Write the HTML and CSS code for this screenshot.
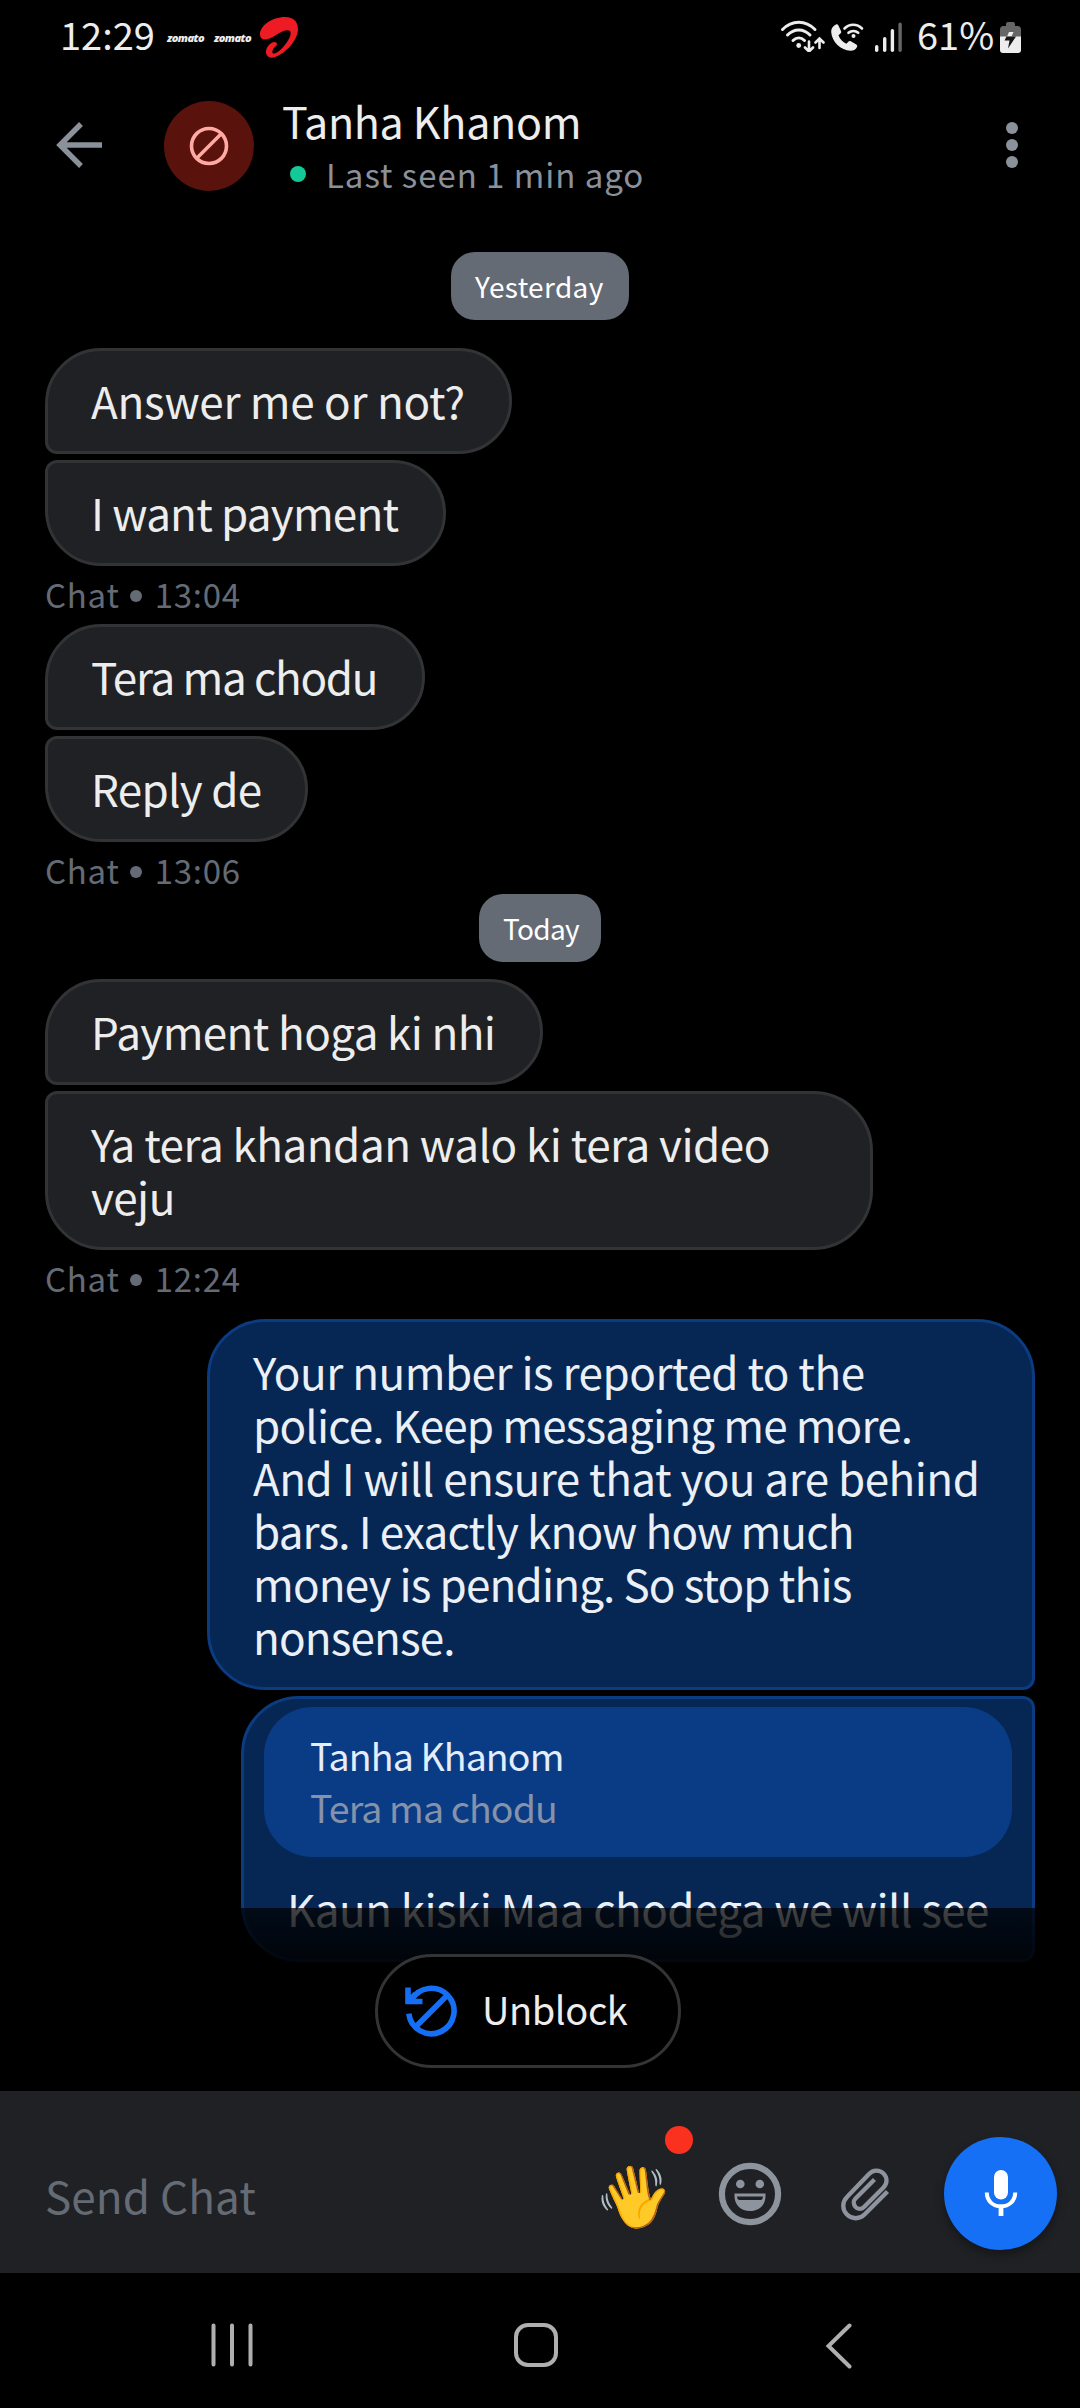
FILE: index.html
```html
<!DOCTYPE html>
<html lang="en">
<head>
<meta charset="utf-8">
<title>Chat – Tanha Khanom</title>
<link rel="stylesheet" href="styles.css">
</head>
<body>
<div class="status">
  <span class="clock">12:29</span>
  <span class="zomato">zomato</span>
  <span class="zomato">zomato</span>
  <svg class="airtel" width="40" height="42" viewBox="0 0 40 42">
    <path fill="#ed1c24" d="M1 18C1 10 13 1 26 1C35 1 39 6 39 14C38 25 27 37 16 41C11 43 7 40 7 36C7 31 11 27 15 26C18 26 19 28 17 30C14 32 13 35 13.500 37C15 39 20 36 25 30C30 24 33 18 31 15C29 13 23 15 17 19C10 24 1 26 1 18Z"/>
  </svg>
  <span class="push"></span>
  <svg class="signals" width="126" height="36" viewBox="0 0 126 36">
    <g fill="none" stroke="#ededed" stroke-width="3" stroke-linecap="round">
      <path d="M3.500 13.500C13 3.800 26.500 3.800 36 13.500M8.500 19C15 12.200 24.500 12.200 31 19M14 24.500C17.600 21 22 21 25.500 24.500"/>
      <path stroke-width="2.600" d="M30 25.500V35M26 31.500l4 4l4-4M40.500 32V22.500M36.500 26.500l4-4l4 4"/>
      <path stroke-width="2.600" d="M65.500 12.500C70.500 7.500 78 7.500 83 12.500M69.500 16.800C72.300 14.300 76.500 14.300 79.200 16.800"/>
    </g>
    <circle cx="19.700" cy="29.500" r="2.400" fill="#ededed"/>
    <circle cx="74.500" cy="20" r="2" fill="#ededed"/>
    <path fill="#ededed" d="M57 8.500c-3 1.500-5 4-4.800 7.500c.7 10 9.500 18.500 19.300 18.700c3.500 0 5.500-1.600 6.600-4c.3-.9 0-1.700-.8-2.200l-5.500-3.200c-.9-.5-1.800-.3-2.500.4l-1.900 2c-3.800-1.700-6.500-4.700-7.900-8.400l2-1.800c.6-.6.9-1.400.6-2.300l-2.800-5.900c-.4-.9-1.400-1.200-2.300-.8z"/>
    <g fill="#ededed"><rect x="96" y="29" width="3.400" height="7" rx="1.700"/><rect x="104" y="21" width="3.400" height="15" rx="1.700"/><rect x="111.700" y="13" width="3.400" height="23" rx="1.700"/><rect x="119.400" y="6.500" width="3.400" height="29.500" rx="1.700" fill="#666"/></g>
  </svg>
  <span class="percent">61%</span>
  <svg class="battery" width="21" height="32" viewBox="0 0 21 32">
    <path fill="#666" d="M0 15V7.500Q0 4 3.500 4H6V2Q6 0 8 0h5Q15 0 15 2V4h2.500Q21 4 21 7.500V15Z"/>
    <path fill="#ededed" d="M0 14.500H21V28Q21 31 18 31H3Q0 31 0 28Z"/>
    <path fill="#ededed" d="M9 10h4.500L11.500 14.500H7Z"/>
    <path fill="#161616" d="M6.500 14.500H16L8 26.500L9.500 18.500H4.500Z"/>
  </svg>
</div>

<header class="header">
  <svg class="back" width="48" height="48" viewBox="0 0 48 48" fill="none" stroke="#8b919b" stroke-width="5.400"><path d="M47 24H6M26 3L5 24L26 45"/></svg>
  <div class="avatar">
    <svg width="40" height="40" viewBox="0 0 40 40" fill="none" stroke="#ffaba4" stroke-width="3.600"><circle cx="20" cy="20" r="17.500"/><path d="M32 8L8 32"/></svg>
  </div>
  <div class="who">
    <div class="name">Tanha Khanom</div>
    <div class="seen"><i class="online"></i>Last seen 1 min ago</div>
  </div>
  <div class="more"><i></i><i></i><i></i></div>
</header>

<main class="chat">
  <div class="day yesterday">Yesterday</div>
  <div class="msg first answer">Answer me or not?</div>
  <div class="msg last want">I want payment</div>
  <div class="time">Chat<i></i>13:04</div>
  <div class="msg first tera">Tera ma chodu</div>
  <div class="msg last reply">Reply de</div>
  <div class="time">Chat<i></i>13:06</div>
  <div class="day today">Today</div>
  <div class="msg first payment">Payment hoga ki nhi</div>
  <div class="msg last long">Ya tera khandan walo ki tera video<br>veju</div>
  <div class="time">Chat<i></i>12:24</div>
  <div class="msg mine first long">Your number is reported to the<br><span class="tight">police. Keep messaging me more.</span><br>And I will ensure that you are behind<br><span class="tight">bars. I exactly know how much<br>money is pending. So stop this<br>nonsense.</span></div>
  <div class="msg mine last quoting">
    <div class="quote"><div>Tanha Khanom</div><div class="quoted">Tera ma chodu</div></div>
    Kaun kiski Maa chodega we will see
  </div>
  <div class="fade"></div>
  <button class="unblock">
    <svg width="54" height="54" viewBox="0 0 54 54" fill="none" stroke="#156ff5" stroke-width="5.600"><path d="M4.800 29.700A22.700 22.700 0 1 0 7.500 16M11 43.500L43.500 11"/><path d="M4 3.500V17.500H18.500M4.500 17L11.500 10"/></svg>
    <span>Unblock</span>
  </button>
</main>

<section class="composer">
  <span class="hint">Send Chat</span>
  <div class="wave"><span>👋</span><i></i></div>
  <svg class="smile" width="64" height="64" viewBox="0 0 64 64">
    <circle cx="32" cy="32" r="28.100" fill="none" stroke="#8e949d" stroke-width="6.200"/>
    <g fill="#8e949d"><circle cx="22.300" cy="22" r="4.300"/><circle cx="41.800" cy="22" r="4.300"/><path d="M16.500 31.500H47.500V34C47.500 43 41 49 32 49S16.500 43 16.500 34Z"/></g>
    <path fill="#202124" d="M19 34.500H45Q45 37.500 43 38H21Q19 37.500 19 34.500Z"/>
  </svg>
  <svg class="clip" width="50" height="56" viewBox="0 0 50 56" fill="none" stroke="#8e949d" stroke-width="4.300">
    <path d="M47.500 25.500L24.500 48.500C19.500 53.500 12 53.500 7 48.500S2 36 7 31L29 8C33 3.500 39.500 3.500 43.500 7.500S47.500 17.500 43.500 21.500L24 41C21.500 43.500 17.500 43.500 15.500 41S13 35 15.500 32.500L34.500 13.500"/>
  </svg>
  <div class="mic">
    <svg width="34" height="48" viewBox="0 0 34 48"><rect x="10" y="0" width="14" height="29.500" rx="7" fill="#fff"/><path fill="none" stroke="#fff" stroke-width="4" d="M2.800 22.500C2.800 31 9 36.300 17 36.300S31.200 31 31.200 22.500"/><path stroke="#fff" stroke-width="4.800" d="M17 36V46"/></svg>
  </div>
</section>

<nav class="nav">
  <svg width="42" height="44" viewBox="0 0 42 44" stroke="#afafaf" stroke-width="4" stroke-linecap="round"><path d="M2.500 2.500V41.500M21 2.500V41.500M39.500 2.500V41.500"/></svg>
  <svg class="home" width="44" height="44" viewBox="0 0 44 44" fill="none" stroke="#afafaf" stroke-width="4"><rect x="2" y="2" width="40" height="40" rx="12"/></svg>
  <svg class="prev" width="28" height="46" viewBox="0 0 28 46" fill="none" stroke="#afafaf" stroke-width="4" stroke-linecap="round"><path d="M24.500 2.500L3.500 23L24.500 43.500"/></svg>
</nav>
</body>
</html>
```
FILE: styles.css
```css
* { box-sizing: border-box; }
body {
  margin: 0;
  width: 1080px;
  height: 2408px;
  display: flex;
  flex-direction: column;
  background: #000;
  color: #ededed;
  font-family: "Noto Sans CJK SC", "Noto Sans", sans-serif;
  font-size: 44px;
  white-space: nowrap;
  overflow: hidden;
}
svg { display: block; flex: none; }

.status { height: 72px; display: flex; align-items: flex-start; padding: 0 59px 0 60px; }
.clock, .percent { font-size: 38px; line-height: 67px; }
.clock { width: 107px; }
.zomato { width: 47px; font: italic 800 11px/76px "Open Sans", sans-serif; letter-spacing: -.6px; }
.airtel { margin-top: 16px; margin-left: -2px; }
.push { flex: 1; }
.signals { margin-top: 16px; margin-right: 12px; }
.percent { width: 83px; }
.battery { margin-top: 22px; }

.header { height: 146px; display: flex; align-items: flex-start; padding: 0 62px 0 55px; }
.back { margin-top: 49px; }
.avatar { width: 90px; height: 90px; margin: 29px 0 0 61px; border-radius: 50%; background: #5a120c; display: grid; place-items: center; }
.who { margin-left: 28px; flex: 1; }
.name { font-size: 43px; line-height: 60px; margin-top: 18px; letter-spacing: -.3px; }
.seen { display: flex; align-items: center; font-size: 33px; line-height: 48px; letter-spacing: .95px; color: #8b919b; }
.online { width: 16px; height: 16px; margin: -1px 20px 0 8px; border-radius: 50%; background: #12c997; }
.more { display: flex; flex-direction: column; gap: 5px; margin-top: 50px; }
.more i { width: 12px; height: 12px; border-radius: 50%; background: #8b919b; }

.chat { position: relative; height: 1873px; padding: 34px 45px 0; display: flex; flex-direction: column; align-items: flex-start; overflow: hidden; }
.day { align-self: center; height: 68px; padding: 0 24px; border-radius: 24px; background: #656b75; color: #fff; font-size: 28px; line-height: 68px; letter-spacing: .35px; flex: none; }
.yesterday { width: 178px; margin-bottom: 28px; }
.today { width: 122px; margin-bottom: 17px; margin-top: -6px; letter-spacing: -.7px; }
.msg {
  flex: none;
  padding: 23px 0 24px 43px;
  margin-bottom: 6px;
  border: 3px solid #323335;
  background: #202124;
  line-height: 53px;
  letter-spacing: -.5px;
}
.first { border-radius: 56px 53px 53px 12px; }
.last { border-radius: 12px 53px 53px 56px; }
.last.long { border-radius: 12px 60px 60px 58px; }
.answer { width: 467px; letter-spacing: -.25px; }
.want { width: 401px; letter-spacing: -.8px; }
.tera { width: 380px; letter-spacing: -1.3px; }
.reply { width: 263px; letter-spacing: -.7px; }
.payment { width: 498px; letter-spacing: -.6px; }
.long { width: 828px; }
.tight { letter-spacing: -.85px; }
.time { display: flex; align-items: center; height: 52px; margin: -6px 0 6px; padding-top: 4px; font-size: 33px; letter-spacing: .75px; color: #656b75; }
.time i { width: 12px; height: 12px; margin: 3px 13px 0 10px; border-radius: 50%; background: #656b75; }
.mine { align-self: flex-end; background: #062654; border-color: #0b3b80; color: #ebeff6; }
.mine.first { border-radius: 58px 58px 12px 58px; margin-top: 11px; }
.mine.last { border-radius: 58px 12px 12px 58px; }
.quoting { width: 794px; padding-top: 8px; letter-spacing: -.58px; }
.quote { width: 748px; height: 150px; margin: 0 0 25px -23px; padding: 22px 46px; border-radius: 48px; background: #0a3c85; font-size: 37.500px; line-height: 52px; letter-spacing: -.88px; color: #e4edfb; }
.quoted { color: #8592aa; }
.fade { position: absolute; left: 0; right: 0; top: 1690px; height: 183px; background: linear-gradient(rgba(0,0,0,.72), #000 50%); }
.unblock {
  position: absolute; left: 375px; top: 1736px; width: 306px; height: 114px;
  display: flex; align-items: center; gap: 24px; padding: 0 0 0 26px;
  border: 3px solid #333436; border-radius: 57px; background: #000;
  color: #ededed; font-family: inherit; font-size: 38px; letter-spacing: -.4px;
}
.unblock span { margin-top: -6px; }

.composer { height: 182px; display: flex; align-items: flex-start; padding: 0 23px 0 45px; background: #202124; }
.hint { width: 552px; line-height: 60px; margin-top: 74px; letter-spacing: .1px; color: #656b75; }
.wave { position: relative; width: 121px; font: 61px/70px "Noto Color Emoji"; margin-top: 70px; }
.wave span { display: inline-block; transform: rotate(18deg); }
.wave i { position: absolute; left: 68px; top: -35px; width: 28px; height: 28px; border-radius: 50%; background: #fb3120; }
.smile { margin-top: 71px; }
.clip { margin: 75px 0 0 58px; }
.mic { width: 113px; height: 113px; margin: 46px 0 0 auto; border-radius: 50%; background: #1570f5; display: grid; place-items: center; box-shadow: 0 5px 10px rgba(0,0,0,.35); }

.nav { flex: 1; display: flex; align-items: flex-start; padding: 50px 0 0 211px; }
.home { margin-left: 261px; }
.prev { margin-left: 267px; }
```
